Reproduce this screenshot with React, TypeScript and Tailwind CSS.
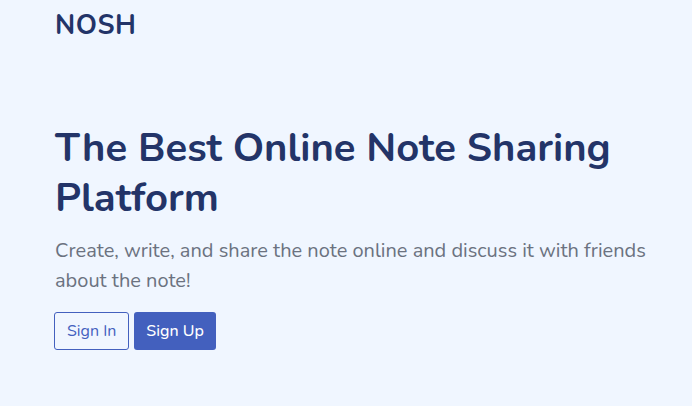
export default function App() {
  return (
    <div className="min-h-[406px] w-full bg-[#f0f6ff] font-['Nunito','Lato','Noto_Sans',sans-serif]">
      <header className="px-[54px] pt-[9px]">
        <div className="pl-px text-[27px] font-bold leading-[34px] tracking-[0.5px] text-[#233468]">NOSH</div>
      </header>
      <main className="pl-[54px] pr-[24px] pt-[80px]">
        <h1 className="pl-px text-[40px] font-bold leading-[50px] text-[#233468]">
          The Best Online Note Sharing
          <br />
          Platform
        </h1>
        <p className="mt-[13px] pl-px text-[20px] leading-[30px] text-[#6b7280]">
          Create, write, and share the note online and discuss it with friends about the note!
        </p>
        <div className="mt-[16px] flex gap-[5px]">
          <button className="h-[38px] rounded-[3px] border border-[#4360be] px-[12px] text-[16px] text-[#4360be]">
            Sign In
          </button>
          <button className="h-[38px] rounded-[3px] bg-[#4360be] px-[12px] text-[16px] font-medium text-white">
            Sign Up
          </button>
        </div>
      </main>
    </div>
  );
}
